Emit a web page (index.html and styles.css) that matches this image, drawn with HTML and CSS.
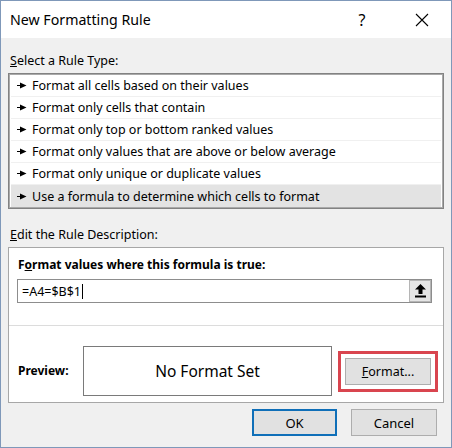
FILE: index.html
```html
<!DOCTYPE html>
<html>
<head>
<meta charset="utf-8">
<link rel="stylesheet" href="styles.css">
</head>
<body>
<div class="window">
  <div class="titlebar">
    <div class="title">New Formatting Rule</div>
    <div class="help">?</div>
    <div class="close">
      <svg width="14" height="14" viewBox="0 0 14 14"><path d="M1 1L13 13M13 1L1 13" stroke="#000" stroke-width="1.1" fill="none"/></svg>
    </div>
  </div>
  <div class="content">
    <div class="label label-top"><u>S</u>elect a Rule Type:</div>
    <div class="listbox">
      <div class="row"><svg class="arr" width="10" height="7" viewBox="0 0 10 7"><path d="M0 3h4v1H0z M3 0.5L9.5 3.5L3 6.5z" fill="#000"/></svg>Format all cells based on their values</div>
      <div class="row"><svg class="arr" width="10" height="7" viewBox="0 0 10 7"><path d="M0 3h4v1H0z M3 0.5L9.5 3.5L3 6.5z" fill="#000"/></svg>Format only cells that contain</div>
      <div class="row"><svg class="arr" width="10" height="7" viewBox="0 0 10 7"><path d="M0 3h4v1H0z M3 0.5L9.5 3.5L3 6.5z" fill="#000"/></svg>Format only top or bottom ranked values</div>
      <div class="row"><svg class="arr" width="10" height="7" viewBox="0 0 10 7"><path d="M0 3h4v1H0z M3 0.5L9.5 3.5L3 6.5z" fill="#000"/></svg>Format only values that are above or below average</div>
      <div class="row"><svg class="arr" width="10" height="7" viewBox="0 0 10 7"><path d="M0 3h4v1H0z M3 0.5L9.5 3.5L3 6.5z" fill="#000"/></svg>Format only unique or duplicate values</div>
      <div class="row selected"><svg class="arr" width="10" height="7" viewBox="0 0 10 7"><path d="M0 3h4v1H0z M3 0.5L9.5 3.5L3 6.5z" fill="#000"/></svg>Use a formula to determine which cells to format</div>
    </div>
    <div class="label label-edit"><u>E</u>dit the Rule Description:</div>
    <div class="descbox">
      <div class="formula-section">
        <div class="bold-label">F<u>o</u>rmat values where this formula is true:</div>
        <div class="input">
          <div class="input-text">=A4=$B$1<span class="caret"></span></div>
          <div class="ref-btn">
            <svg width="11" height="14" viewBox="0 0 11 14"><path d="M5.5 0L11 5.5H7.5V10H3.5V5.5H0Z" fill="#000"/><rect x="0" y="11.5" width="11" height="2" fill="#000"/></svg>
          </div>
        </div>
      </div>
      <div class="preview-section">
        <div class="bold-label preview-label">Preview:</div>
        <div class="preview-box">No Format Set</div>
        <div class="highlight">
          <div class="btn format-btn"><u>F</u>ormat...</div>
        </div>
      </div>
    </div>
    <div class="footer">
      <div class="btn ok-btn">OK</div>
      <div class="btn cancel-btn">Cancel</div>
    </div>
  </div>
</div>
</body>
</html>
```
FILE: styles.css
```css
html, body {
  margin: 0;
  padding: 0;
}
body {
  width: 452px;
  height: 448px;
  font-family: "Noto Sans", "Open Sans", sans-serif;
  font-size: 12.5px;
  color: #000;
}
.window {
  width: 452px;
  height: 448px;
  box-sizing: border-box;
  border: 1px solid #7f98b9;
  background: #f0f0f0;
  display: flex;
  flex-direction: column;
}
.titlebar {
  height: 37px;
  background: #fff;
  display: flex;
  align-items: center;
  padding-left: 9px;
}
.title {
  font-size: 14.2px;
  flex: 1;
}
.help {
  font-size: 16px;
  width: 14px;
  text-align: center;
  margin-right: 46px;
}
.close {
  width: 14px;
  height: 14px;
  margin-right: 22px;
  display: flex;
}
.content {
  padding: 0 7px;
  display: flex;
  flex-direction: column;
}
.label {
  line-height: 18px;
  padding-left: 2px;
}
.label-top {
  margin-top: 14px;
}
.label-edit {
  margin-top: 17px;
}
.listbox {
  margin-top: 3px;
  border: 1px solid #828282;
  box-shadow: inset 0 0 0 1px #a9a9a9;
  background: #fff;
  padding: 1px 2px;
}
.row {
  height: 22px;
  box-sizing: border-box;
  border-bottom: 1px solid #f0f0f0;
  display: flex;
  align-items: center;
  padding-left: 6px;
  white-space: nowrap;
}
.row.selected {
  background: #e3e3e3;
  border-bottom: none;
}
.arr {
  margin-right: 5px;
  flex: none;
}
.descbox {
  margin-top: 3px;
  height: 156px;
  box-sizing: border-box;
  border: 1px solid #a7a7a7;
  background: #fff;
  display: flex;
  flex-direction: column;
}
.formula-section {
  padding: 8px 11px 22px 8px;
  border-bottom: 1px solid #dcdcdc;
}
.bold-label {
  font-weight: bold;
  font-size: 12px;
  line-height: 18px;
  padding-left: 1px;
}
.input {
  margin-top: 5px;
  height: 24px;
  box-sizing: border-box;
  border: 1px solid #8d8d8d;
  display: flex;
  align-items: center;
}
.input-text {
  flex: 1;
  padding-left: 4px;
  display: flex;
  align-items: center;
}
.caret {
  display: inline-block;
  width: 1px;
  height: 15px;
  background: #000;
  margin-left: 1px;
}
.ref-btn {
  width: 22px;
  height: 22px;
  box-sizing: border-box;
  border: 1px solid #b5b5b5;
  background: #e5e5e5;
  display: flex;
  align-items: center;
  justify-content: center;
}
.preview-section {
  flex: 1;
  display: flex;
  align-items: center;
  padding: 14px 6px 0 9px;
}
.preview-label {
  width: 65px;
  flex: none;
  padding-left: 0;
}
.preview-box {
  width: 249px;
  height: 50px;
  box-sizing: border-box;
  border: 1px solid #7a7a7a;
  display: flex;
  align-items: center;
  justify-content: center;
  font-size: 15.5px;
  flex: none;
}
.highlight {
  margin-left: 6px;
  border: 3px solid #d9454f;
  padding: 4px;
}
.btn {
  height: 27px;
  box-sizing: border-box;
  background: #e1e1e1;
  border: 1px solid #adadad;
  display: flex;
  align-items: center;
  justify-content: center;
}
.format-btn {
  width: 86px;
}
.footer {
  display: flex;
  justify-content: flex-end;
  gap: 14px;
  margin-top: 6px;
  padding-right: 7px;
}
.ok-btn {
  width: 85px;
  border: 2px solid #0f6fb8;
  font-size: 13px;
}
.cancel-btn {
  width: 86px;
  font-size: 13px;
}
```
